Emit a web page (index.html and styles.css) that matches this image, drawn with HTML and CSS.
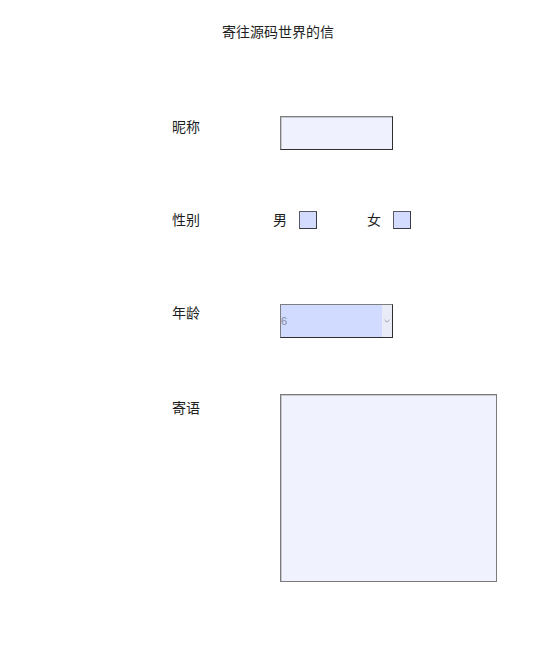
FILE: index.html
```html
<!DOCTYPE html>
<html lang="zh-CN">
<head>
<meta charset="utf-8">
<title>寄往源码世界的信</title>
<link rel="stylesheet" href="styles.css">
</head>
<body>
<div class="page">
  <div class="title">寄往源码世界的信</div>
  <form class="form">
    <div class="row row-name">
      <label class="label">昵称</label>
      <input class="text-input" type="text">
    </div>
    <div class="row row-gender">
      <span class="label">性别</span>
      <div class="gender">
        <span class="opt-text">男</span>
        <input class="check" type="checkbox">
        <span class="opt-text opt-female">女</span>
        <input class="check" type="checkbox">
      </div>
    </div>
    <div class="row row-age">
      <label class="label">年龄</label>
      <div class="select-box">
        <select class="select">
          <option>6</option>
        </select>
        <span class="arrow">
          <svg width="6" height="4" viewBox="0 0 6 4"><path d="M0.5 0.8 L3 3.2 L5.5 0.8" fill="none" stroke="#9a9aa6" stroke-width="0.9"/></svg>
        </span>
      </div>
    </div>
    <div class="row row-msg">
      <label class="label label-msg">寄语</label>
      <textarea class="textarea"></textarea>
    </div>
  </form>
</div>
</body>
</html>
```

FILE: styles.css
```css
html, body {
  margin: 0;
  padding: 0;
  background: #ffffff;
}

.page {
  width: 556px;
  padding-top: 21px;
  font-family: "Noto Sans CJK SC", "Noto Sans", sans-serif;
  font-size: 14px;
  line-height: 20px;
  color: #1e1e1e;
}

.title {
  text-align: center;
  margin: 0;
}

.form {
  display: flex;
  flex-direction: column;
  margin: 0;
  padding-left: 172px;
}

.row {
  display: flex;
  align-items: flex-start;
}

.row-name { margin-top: 75px; }
.row-gender { margin-top: 59px; }
.row-age { margin-top: 73px; }
.row-msg { margin-top: 56px; }

.label {
  width: 108px;
  flex: none;
}

.label-msg {
  margin-top: 3px;
}

.text-input {
  box-sizing: border-box;
  width: 113px;
  height: 34px;
  margin: 0;
  padding: 0 2px;
  border: 1px solid;
  border-color: #7e7e7e #2f2f2f #2f2f2f #7e7e7e;
  box-shadow: inset 1px 1px 0 #c6c6cf;
  background: #eff2fe;
  outline: none;
}

.gender {
  display: flex;
  align-items: flex-start;
  margin-left: -7px;
}

.opt-text {
  width: 14px;
}

.opt-female {
  margin-left: 50px;
}

.check {
  appearance: none;
  -webkit-appearance: none;
  box-sizing: border-box;
  width: 18px;
  height: 18px;
  margin: 2px 0 0 12px;
  border: 1px solid;
  border-color: #5a5a66 #3a3a44 #3a3a44 #5a5a66;
  background: #d3dbff;
}

.select-box {
  display: flex;
  box-sizing: border-box;
  width: 113px;
  height: 34px;
  margin-top: 2px;
  border: 1px solid;
  border-color: #7e7e7e #2f2f2f #2f2f2f #7e7e7e;
  background: #d1daff;
}

.select {
  appearance: none;
  -webkit-appearance: none;
  flex: 1;
  min-width: 0;
  margin: 0;
  padding: 0;
  border: none;
  background: transparent;
  font-family: "Liberation Sans", sans-serif;
  font-size: 11px;
  color: #858aa2;
  outline: none;
}

.arrow {
  flex: none;
  width: 10px;
  display: flex;
  align-items: center;
  justify-content: center;
  background: #e9ebf7;
}

.arrow svg {
  display: block;
}

.textarea {
  box-sizing: border-box;
  width: 217px;
  height: 188px;
  margin: 0;
  padding: 2px;
  border: 1px solid #7b7b7b;
  box-shadow: inset 1px 1px 0 #c8c8d0;
  background: #f0f3fe;
  resize: none;
  outline: none;
}
```
